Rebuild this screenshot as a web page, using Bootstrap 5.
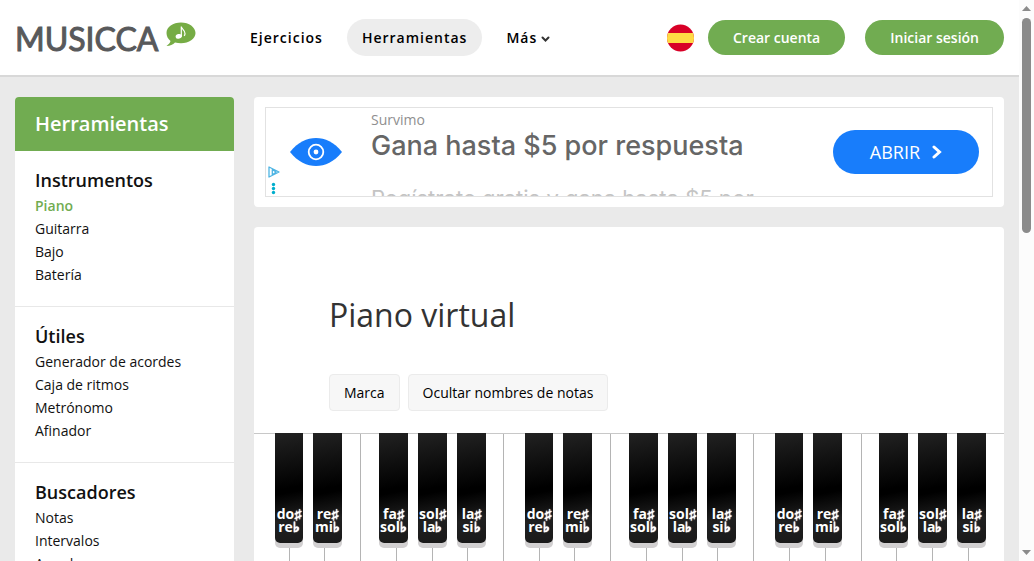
<!DOCTYPE html>
<html lang="es">
<head>
<meta charset="utf-8">
<meta name="viewport" content="width=device-width, initial-scale=1">
<title>Piano virtual - Musicca</title>
<link rel="stylesheet" href="https://cdn.jsdelivr.net/npm/bootstrap@5.3.0/dist/css/bootstrap.min.css">
<style>
  :root { --leaf: #71ac51; --line: #e8e8e8; }
  body { font-family: "Open Sans", "Noto Sans", sans-serif; font-size: 14px; line-height: 23px; color: #111; background: #eaeaea; }
  a { color: inherit; text-decoration: none; }

  .site-head { height: 77px; padding: 0 15px; border-bottom: 2px solid #d8d8d8; }
  .brand { width: 220px; color: #58595b; }
  .brand-word { width: 150px; padding-top: 2px; font: 400 32px/36px Lato, sans-serif; -webkit-text-stroke: 1px #58595b; }
  .brand-mark { margin-bottom: 6px; }
  .main-nav { gap: 9px; }
  .main-nav .nav-link { padding: 7px 15px; border-radius: 19px; font-weight: 600; letter-spacing: 1px; color: #000; }
  .main-nav .nav-link.active { background: #ededed; }
  .flag { margin-right: 14px; }
  .head-actions, .main-col { gap: 20px; }
  .pill { height: 35px; padding: 0 25px; border: 0; border-radius: 18px; background: var(--leaf); color: #fff; font-size: 14px; font-weight: 600; line-height: 35px; }

  .page-body { padding: 20px 15px 0; gap: 20px; }
  .side { width: 219px; border-radius: 4px; }
  .side-title { margin: 0; padding: 13px 20px; background: var(--leaf); color: #fff; font-size: 20px; line-height: 28px; font-weight: 600; }
  .side-group { padding: 15px 20px 20px; border-bottom: 1px solid var(--line); }
  .side-group h2 { margin: 0; font-size: 18px; line-height: 28px; font-weight: 600; }
  .side-group .current { color: var(--leaf); font-weight: 600; }
  .panel { border-radius: 4px; }

  .promo { padding: 10px 11px; }
  .promo-box { height: 90px; border: 1px solid #e2e2e2; }
  .promo-side { width: 105px; }
  .promo-eye { margin: 29px 0 0 23px; }
  .promo-marks { left: 2px; bottom: 0; }
  .promo-name { color: #8f8f8f; line-height: 24px; }
  .promo-head { color: #666; font: 500 27px/28px Inter, sans-serif; }
  .promo-more { margin-top: 24px; color: #c4c4c4; font: 400 22px/28px Inter, sans-serif; }
  .promo-btn { width: 146px; height: 44px; margin-right: 13px; border: 0; border-radius: 22px; background: #187dfb; color: #fff; font-size: 18px; gap: 12px; }

  .tool { padding: 66px 75px 22px; }
  .tool h1 { margin: 0 0 37px; font-size: 32px; line-height: 44px; font-weight: 400; color: #333; }
  .tool-btn { height: 37px; padding: 0 14px; border: 1px solid #ebebeb; border-radius: 4px; background: #f7f7f7; color: #000; font-size: 14px; }

  .keys { border-top: 1px solid #c8c8c8; }
  .octave { flex: 1 1 0; height: 190px; }
  .white-key { flex: 1 1 0; padding: 0; border: 0; border-right: 1px solid #b4b4b4; background: #fff; }
  .octave:last-child .white-key:nth-child(7) { border-right: 0; }
  .black-row { top: -1px; left: 0; width: 100%; height: 110px; display: grid;
    grid-template-columns: 21fr 28fr 10fr 29fr 37fr 29fr 10fr 29fr 10fr 29fr 18fr; }
  .black-key { display: flex; flex-direction: column; justify-content: flex-end; align-items: center; min-width: 0; padding: 0 0 10px; border: 0; border-radius: 0 0 5px 5px;
    background: linear-gradient(170deg, #222 0%, #000 50%, #000 54%, #202020 78%, #191919 100%); box-shadow: 0 5px 0 #d2d0d1; color: #fff; font-size: 14px; font-weight: 700; line-height: 13px; white-space: nowrap; }
  .accidental { line-height: 0; text-shadow: 0 0 1px #fff, 0 0 1px #fff; }
  .k1 { grid-column: 2; } .k2 { grid-column: 4; } .k3 { grid-column: 6; } .k4 { grid-column: 8; } .k5 { grid-column: 10; }

  .scroll-rail { width: 15px; padding: 5px 3px; background: #fcfcfc; }
  .scroll-thumb { width: 9px; height: 39%; margin-top: 7px; border-radius: 5px; background: #8b8b8b; }
</style>
</head>
<body>
<div class="d-flex vh-100 overflow-hidden">
  <div class="flex-grow-1 overflow-hidden">
    <header class="site-head bg-white d-flex align-items-center">
      <a class="brand d-flex align-items-center" href="#" aria-label="Musicca">
        <span class="brand-word">MUSICCA</span>
        <svg class="brand-mark" width="31" height="25" viewBox="0 0 30 25" aria-hidden="true">
          <path fill="#76ac45" d="M15.500 .5C7.500 .5 1 5 1 11c0 3 1.500 6 4 8-.5 2-2 3.500-4 5 3.500 0 6.500-1.500 8.500-3.500 2 .5 4 .7 6 .7 8 0 14.500-4.500 14.500-10.200S23.500 .5 15.500.5z"/>
          <ellipse cx="13.200" cy="14.400" rx="3.200" ry="2.300" fill="#fff" transform="rotate(-15 13 14)"/>
          <path d="M15.800 14.500V4.500c.5 3 3.800 3.500 3.700 7 0 1-.3 1.700-.8 2.300" fill="none" stroke="#fff" stroke-width="1.200"/>
        </svg>
      </a>
      <nav class="main-nav nav flex-grow-1" aria-label="Principal">
        <a class="nav-link" href="#">Ejercicios</a>
        <a class="nav-link active" href="#">Herramientas</a>
        <a class="nav-link" href="#">Más<svg class="ms-1" width="9" height="7" viewBox="0 0 9 7" fill="none" stroke="#333" stroke-width="2" stroke-linecap="round" aria-hidden="true"><path d="M1.500 1.500l3 3 3-3"/></svg></a>
      </nav>
      <a href="#" class="flag d-flex" aria-label="Español">
        <svg width="27" height="28" viewBox="0 0 27 28" aria-hidden="true"><clipPath id="disc"><circle cx="13.500" cy="14" r="13.500"/></clipPath><g clip-path="url(#disc)"><path fill="#d80027" d="M0 0h27v28H0z"/><path fill="#ffda44" d="M0 9h27v10H0z"/></g></svg>
      </a>
      <div class="head-actions d-flex">
        <button class="pill" type="button">Crear cuenta</button>
        <button class="pill" type="button">Iniciar sesión</button>
      </div>
    </header>

    <div class="page-body d-flex align-items-start">
      <aside class="side bg-white flex-shrink-0 overflow-hidden">
        <h2 class="side-title">Herramientas</h2>
        <section class="side-group"><h2>Instrumentos</h2>
          <ul class="list-unstyled mb-0"><li><a class="current" href="#">Piano</a></li><li><a href="#">Guitarra</a></li><li><a href="#">Bajo</a></li><li><a href="#">Batería</a></li></ul>
        </section>
        <section class="side-group"><h2>Útiles</h2>
          <ul class="list-unstyled mb-0"><li><a href="#">Generador de acordes</a></li><li><a href="#">Caja de ritmos</a></li><li><a href="#">Metrónomo</a></li><li><a href="#">Afinador</a></li></ul>
        </section>
        <section class="side-group"><h2>Buscadores</h2>
          <ul class="list-unstyled mb-0"><li><a href="#">Notas</a></li><li><a href="#">Intervalos</a></li><li><a href="#">Acordes</a></li></ul>
        </section>
      </aside>

      <main class="main-col flex-grow-1 d-flex flex-column">
        <section class="panel promo bg-white" aria-label="Anuncio">
          <div class="promo-box d-flex position-relative overflow-hidden">
            <div class="promo-side flex-shrink-0">
              <svg class="promo-eye d-block" width="54" height="30" viewBox="0 0 54 30" aria-hidden="true">
                <path fill="#187dfb" d="M1 15C9 5 18 1 27 1s18 4 26 14C45 25 36 29 27 29S9 25 1 15z"/>
                <circle cx="27" cy="15" r="7.300" fill="none" stroke="#fff" stroke-width="1.800"/><circle cx="27" cy="15" r="2.400" fill="#fff"/>
              </svg>
              <svg class="promo-marks position-absolute" width="13" height="30" viewBox="0 0 13 30" aria-hidden="true">
                <path d="M1 1v10l10-5zM4.300 3.500v5.500L8 6z" fill="none" stroke="#4db4e3" stroke-width="1.300" stroke-linejoin="round"/>
                <g fill="#00aecd"><circle cx="5.500" cy="18.500" r="1.700"/><circle cx="5.500" cy="22.500" r="1.700"/><circle cx="5.500" cy="26.500" r="1.700"/></g>
              </svg>
            </div>
            <div class="flex-grow-1 text-nowrap">
              <div class="promo-name">Survimo</div>
              <div class="promo-head">Gana hasta $5 por respuesta</div>
              <div class="promo-more">Regístrate gratis y gana hasta $5 por</div>
            </div>
            <button class="promo-btn d-flex align-items-center justify-content-center align-self-center flex-shrink-0" type="button">ABRIR<svg width="10" height="14" viewBox="0 0 10 14" fill="none" stroke="#fff" stroke-width="3" stroke-linecap="round" aria-hidden="true"><path d="M2 2l5.500 5L2 12"/></svg></button>
          </div>
        </section>

        <section class="panel bg-white">
          <div class="tool">
            <h1>Piano virtual</h1>
            <div class="d-flex gap-2"><button class="tool-btn" type="button">Marca</button><button class="tool-btn" type="button">Ocultar nombres de notas</button></div>
          </div>
          <div class="keys d-flex" id="keys"></div>
        </section>
      </main>
    </div>
  </div>
  <div class="scroll-rail d-flex flex-column flex-shrink-0 align-items-center" aria-hidden="true">
    <svg width="9" height="6" viewBox="0 0 9 6"><path fill="#8b8b8b" d="M0 6l4.500-5L9 6z"/></svg>
    <div class="scroll-thumb"></div>
    <svg class="mt-auto" width="9" height="6" viewBox="0 0 9 6"><path fill="#8b8b8b" d="M0 0h9L4.500 5z"/></svg>
  </div>
</div>
<script src="https://cdn.jsdelivr.net/npm/bootstrap@5.3.0/dist/js/bootstrap.bundle.min.js"></script>
<script>
  // Three octaves: seven white keys each, with the five black keys laid over them.
  const whites = ['do', 're', 'mi', 'fa', 'sol', 'la', 'si'];
  const blacks = [['do', 're'], ['re', 'mi'], ['fa', 'sol'], ['sol', 'la'], ['la', 'si']];
  const octave = '<div class="octave d-flex position-relative">'
    + whites.map(n => `<button class="white-key" type="button" aria-label="${n}"></button>`).join('')
    + '<div class="black-row position-absolute">'
    + blacks.map((b, i) => `<button class="black-key k${i + 1}" type="button"><span>${b[0]}<span class="accidental">♯</span></span><span>${b[1]}<span class="accidental">♭</span></span></button>`).join('')
    + '</div></div>';
  document.getElementById('keys').innerHTML = octave.repeat(3);
</script>
</body>
</html>
